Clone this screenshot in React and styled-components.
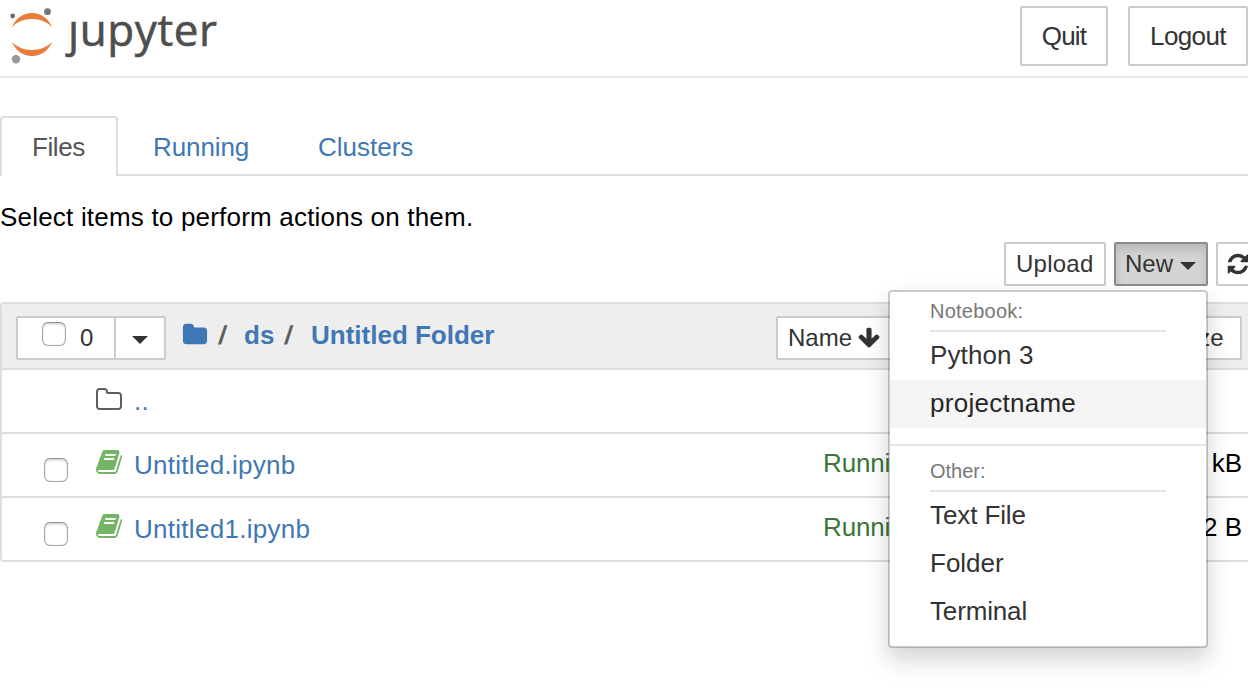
import React from "react";
import styled, { createGlobalStyle } from "styled-components";

const Global = createGlobalStyle`
  * { box-sizing: border-box; }
  html, body { margin: 0; background: #fff; overflow: hidden; }
  body { font: 26px/36px "Liberation Sans", Arial, sans-serif; color: #000; }
`;

const Page = styled.div`
  width: 1248px;
  height: 688px;
  overflow: hidden;
`;
const Header = styled.header`
  height: 78px;
  border-bottom: 2px solid #e7e7e7;
  display: flex;
  justify-content: space-between;
  padding-top: 6px;
`;
const Brand = styled.div`
  display: flex;
  margin-top: -6px;
`;
const Wordmark = styled.span`
  font: 44px/60px "Open Sans", "Noto Sans", sans-serif;
  color: #4e4e4e;
  letter-spacing: 0.6px;
  -webkit-text-stroke: 0.6px #4e4e4e;
  margin: -1px 0 0 10px;
  padding-left: 4px;
  clip-path: polygon(0 22px, 20px 22px, 20px 0, 100% 0, 100% 100%, 0 100%);
`;
const HeaderButtons = styled.div`
  display: flex;
  gap: 20px;
`;
const HeaderButton = styled.button`
  height: 60px;
  width: ${(p) => p.$w}px;
  padding: 0;
  font: inherit;
  letter-spacing: ${(p) => p.$spacing || "0"};
  color: #333;
  background: #fff;
  border: 2px solid #ccc;
  border-radius: 2px;
`;
const Tabs = styled.nav`
  display: flex;
  height: 60px;
  margin-top: 38px;
  box-shadow: inset 0 -2px #ddd;
`;
const Tab = styled.a`
  width: ${(p) => p.$w}px;
  padding: 11px 0 0 ${(p) => p.$pad}px;
  color: ${(p) => (p.$active ? "#555" : "#4078b5")};
  border: ${(p) => (p.$active ? "2px solid #ddd" : "2px solid transparent")};
  border-bottom: 0;
  border-radius: 4px 4px 0 0;
  background: ${(p) => (p.$active ? "#fff" : "transparent")};
  letter-spacing: ${(p) => p.$spacing || "0"};
`;
const Wide = styled.main`
  width: 1262px;
`;
const Hint = styled.p`
  margin: 23px 0 7px;
  letter-spacing: 0.2px;
`;
const Toolbar = styled.div`
  display: flex;
  justify-content: flex-end;
  gap: 8px;
`;
const SmallButton = styled.button`
  display: flex;
  align-items: center;
  height: 44px;
  width: ${(p) => p.$w}px;
  padding: 0 0 0 ${(p) => p.$pad ?? 10}px;
  gap: ${(p) => p.$gap ?? 7}px;
  font: 24px/36px "Liberation Sans", Arial, sans-serif;
  letter-spacing: ${(p) => p.$spacing || "0"};
  color: #333;
  white-space: nowrap;
  border: 2px solid ${(p) => (p.$open ? "#8c8c8c" : "#ccc")};
  border-radius: 2px;
  background: ${(p) => (p.$open ? "#d4d4d4" : "#fff")};
  box-shadow: ${(p) => (p.$open ? "inset 0 6px 10px rgba(0,0,0,.125)" : "none")};
`;
const Caret = styled.span`
  border: 8px solid transparent;
  border-top-color: #333;
  border-bottom: 0;
  margin-top: 3px;
`;
const MenuAnchor = styled.div`
  position: relative;
`;
const Menu = styled.div`
  position: absolute;
  z-index: 5;
  top: 48px;
  right: 0;
  width: 320px;
  padding: 5px 0 10px;
  background: #fff;
  background-clip: padding-box;
  border: 2px solid rgba(0, 0, 0, 0.2);
  border-radius: 4px;
  box-shadow: 0 12px 24px rgba(0, 0, 0, 0.175);
`;
const MenuHeading = styled.div`
  margin: 0 40px;
  padding-bottom: 5px;
  font-size: 20px;
  line-height: 28px;
  letter-spacing: ${(p) => p.$spacing || "0"};
  color: #777;
  border-bottom: 2px solid #e5e5e5;
`;
const MenuItem = styled.div`
  height: 48px;
  padding: 5px 40px;
  color: ${(p) => (p.$active ? "#262626" : "#333")};
  background: ${(p) => (p.$active ? "#f5f5f5" : "#fff")};
  letter-spacing: ${(p) => p.$spacing || "0"};
`;
const MenuDivider = styled.div`
  height: 2px;
  margin: 16px 0 11px;
  background: #e5e5e5;
`;
const List = styled.section`
  margin-top: 16px;
  border: 2px solid #ddd;
  border-radius: 4px;
`;
const ListHeader = styled.div`
  display: flex;
  height: 64px;
  padding: 12px 18px 0 14px;
  background: #eee;
`;
const SelectGroup = styled.div`
  display: flex;
  width: 150px;
  height: 44px;
  border: 2px solid #ccc;
  border-radius: 2px;
  background: #fff;
  color: #333;
  font-size: 24px;
`;
const SelectAll = styled.div`
  display: flex;
  width: 98px;
  padding: 4px 0 0 24px;
  border-right: 2px solid #ccc;
  line-height: 32px;
`;
const SelectCount = styled.span`
  margin-left: 14px;
`;
const SelectToggle = styled.div`
  flex: 1;
  display: flex;
  align-items: center;
  justify-content: center;
`;
const Checkbox = styled.div`
  flex: none;
  width: 24px;
  height: 24px;
  border: 1px solid #aaa;
  border-top-color: #8e8e8e;
  border-radius: 6px;
  background: #fff;
  box-shadow: inset 0 2px 2px rgba(0, 0, 0, 0.12), inset 0 0 1px rgba(0, 0, 0, 0.3);
`;
const Crumbs = styled.div`
  display: flex;
  flex: 1;
  padding: 1px 0 0 16px;
  color: #4078b5;
  font-weight: bold;
`;
const Crumb = styled.span`
  width: ${(p) => p.$w}px;
`;
const Slash = styled.span`
  width: ${(p) => p.$w}px;
  color: #5e5e5e;
  transform: skewX(-8deg);
`;
const SortGroup = styled.div`
  display: flex;
`;
const Row = styled.div`
  display: flex;
  height: 64px;
  border-top: 2px solid #ddd;
  padding-right: 18px;
`;
const CheckCell = styled.div`
  width: 93px;
  padding: 24px 0 0 42px;
`;
const IconCell = styled.div`
  width: 39px;
  padding-top: ${(p) => p.$top}px;
`;
const FileName = styled.a`
  flex: 1;
  padding-top: 13px;
  color: #4078b5;
  letter-spacing: 0.28px;
`;
const Status = styled.span`
  width: 240px;
  padding-top: 11px;
  color: #3c763d;
  letter-spacing: -0.15px;
`;
const Size = styled.span`
  width: 179px;
  padding-top: 11px;
  text-align: right;
`;
const Glyph = styled.svg`
  display: block;
  flex: none;
  fill: ${(p) => p.$color || "#333"};
  margin: ${(p) => p.$m || "0"};
`;

const paths = {
  folder:
    "M1728 608v704q0 92-66 158t-158 66h-1216q-92 0-158-66t-66-158v-960q0-92 66-158t158-66h320q92 0 158 66t66 158v32h672q92 0 158 66t66 158z",
  folderOpen:
    "M1600 1312v-704q0-40-28-68t-68-28h-704q-40 0-68-28t-28-68v-64q0-40-28-68t-68-28h-320q-40 0-68 28t-28 68v960q0 40 28 68t68 28h1216q40 0 68-28t28-68zm128-704v704q0 92-66 158t-158 66h-1216q-92 0-158-66t-66-158v-960q0-92 66-158t158-66h320q92 0 158 66t66 158v32h672q92 0 158 66t66 158z",
  book:
    "M1703 478q40 57 18 129l-275 906q-19 64-76.500 107.500t-122.500 43.500h-923q-77 0-148.500-53.500t-99.500-131.500q-24-67-2-127 0-4 3-27t4-37q1-8-3-21.500t-3-19.500q2-11 8-21t16.500-23.500 16.500-23.500q23-38 45-91.500t30-91.500q3-10 .5-30t-.5-28q3-11 17-28t17-23q21-36 42-92t25-90q1-9-2.500-32t.5-28q4-13 22-30.500t22-22.500q19-26 42.500-84.500t27.500-96.500q1-8-3-25.500t-2-26.500q2-8 9-18t18-23 17-21q8-12 16.500-30.500t15-35 16-36 19.500-32 26.500-23.500 36-11.500 47.500 5.500l-1 3q38-9 51-9h761q74 0 114 56t18 130l-274 906q-36 119-71.500 153.500t-128.500 34.500h-869q-27 0-38 15-11 16-1 43 24 70 144 70h923q29 0 56-15.500t35-41.500l300-987q7-22 5-57 38 15 59 43zm-1064 2q-4 13 2 22.500t20 9.500h608q13 0 25.500-9.500t16.500-22.500l21-64q4-13-2-22.500t-20-9.500h-608q-13 0-25.500 9.500t-16.500 22.500zm-83 256q-4 13 2 22.500t20 9.500h608q13 0 25.500-9.500t16.500-22.500l21-64q4-13-2-22.500t-20-9.500h-608q-13 0-25.500 9.500t-16.500 22.500z",
  refresh:
    "M1639 1056q0 5-1 7-64 268-268 434.500t-478 166.500q-146 0-282.500-55t-243.500-157l-129 129q-19 19-45 19t-45-19-19-45v-448q0-26 19-45t45-19h448q26 0 45 19t19 45-19 45l-137 137q71 66 161 102t187 36q134 0 250-65t186-179q11-17 53-117 8-23 30-23h192q13 0 22.500 9.500t9.500 22.500zm25-800v448q0 26-19 45t-45 19h-448q-26 0-45-19t-19-45 19-45l138-138q-148-137-349-137-134 0-250 65t-186 179q-11 17-53 117-8 23-30 23h-199q-13 0-22.500-9.500t-9.500-22.500v-7q65-268 270-434.500t480-166.500q146 0 284 55.500t245 156.500l130-129q19-19 45-19t45 19 19 45z",
  arrowDown:
    "M1675 832q0 53-37 90l-651 652q-39 37-91 37-53 0-90-37l-651-652q-38-36-38-90 0-53 38-91l74-75q39-37 91-37 53 0 90 37l294 294v-704q0-52 38-90t90-38h128q52 0 90 38t38 90v704l294-294q37-37 90-37 52 0 91 37l75 75q37 39 37 91z",
};

const Icon = ({ name, size, color, m }) => (
  <Glyph viewBox="0 0 1792 1792" width={size} height={size} $color={color} $m={m}>
    <path d={paths[name]} />
  </Glyph>
);

const Logo = () => (
  <svg width="54" height="70" viewBox="0 0 54 70">
    <circle cx="12.700" cy="16" r="2.400" fill="#6b6b6b" />
    <circle cx="47.500" cy="11.700" r="3.400" fill="#767677" />
    <circle cx="16" cy="59.200" r="4.200" fill="#989898" />
    <path d="M12 27.500C15 18.500 23 13 32 13S49 18.500 52 27.500C47.500 22 40.500 19 32 19S16.500 22 12 27.500Z" fill="#e67e3c" />
    <path d="M12 41.500C15 50.500 23 56 32 56S49 50.500 52 41.500C47.500 47 40.500 50 32 50S16.500 47 12 41.500Z" fill="#e67e3c" />
  </svg>
);

const files = [
  { name: "Untitled.ipynb", size: "1.14 kB" },
  { name: "Untitled1.ipynb", size: "72 B" },
];

export default function App() {
  return (
    <Page>
      <Global />
      <Header>
        <Brand>
          <Logo />
          <Wordmark>jupyter</Wordmark>
        </Brand>
        <HeaderButtons>
          <HeaderButton $w={88} $spacing="-0.8px">Quit</HeaderButton>
          <HeaderButton $w={120} $spacing="-0.6px">Logout</HeaderButton>
        </HeaderButtons>
      </Header>
      <Tabs>
        <Tab $active $w={118} $pad={30} $spacing="-0.4px">Files</Tab>
        <Tab $w={168} $pad={33} $spacing="-0.1px">Running</Tab>
        <Tab $w={168} $pad={30}>Clusters</Tab>
      </Tabs>
      <Wide>
        <Hint>Select items to perform actions on them.</Hint>
        <Toolbar>
          <SmallButton $w={102} $spacing="0.25px">Upload</SmallButton>
          <MenuAnchor>
            <SmallButton $w={94} $open $pad={9}>New<Caret /></SmallButton>
            <Menu>
              <MenuHeading $spacing="0.25px">Notebook:</MenuHeading>
              <MenuItem $spacing="0.12px">Python 3</MenuItem>
              <MenuItem $active $spacing="0.27px">projectname</MenuItem>
              <MenuDivider />
              <MenuHeading>Other:</MenuHeading>
              <MenuItem $spacing="-0.1px">Text File</MenuItem>
              <MenuItem>Folder</MenuItem>
              <MenuItem $spacing="-0.15px">Terminal</MenuItem>
            </Menu>
          </MenuAnchor>
          <SmallButton $w={46} $pad={8}><Icon name="refresh" size={24} /></SmallButton>
        </Toolbar>
        <List>
          <ListHeader>
            <SelectGroup>
              <SelectAll>
                <Checkbox />
                <SelectCount>0</SelectCount>
              </SelectAll>
              <SelectToggle><Caret /></SelectToggle>
            </SelectGroup>
            <Crumbs>
              <Icon name="folder" size={26} color="#4078b5" m="5px 10px 0 0" />
              <Slash $w={26}>/</Slash>
              <Crumb $w={40}>ds</Crumb>
              <Slash $w={27}>/</Slash>
              <Crumb $w={200}>Untitled Folder</Crumb>
            </Crumbs>
            <SortGroup>
              <SmallButton $w={350} $gap={5}>Name<Icon name="arrowDown" size={24} m="-1px 0 0" /></SmallButton>
              <SmallButton $w={116} $pad={49}>Size</SmallButton>
            </SortGroup>
          </ListHeader>
          <Row>
            <CheckCell />
            <IconCell $top={16}><Icon name="folderOpen" size={28} color="#5e5e5e" /></IconCell>
            <FileName>..</FileName>
          </Row>
          {files.map((f) => (
            <Row key={f.name}>
              <CheckCell><Checkbox /></CheckCell>
              <IconCell $top={14}><Icon name="book" size={28} color="#74b566" /></IconCell>
              <FileName>{f.name}</FileName>
              <Status>Running</Status>
              <Size>{f.size}</Size>
            </Row>
          ))}
        </List>
      </Wide>
    </Page>
  );
}
